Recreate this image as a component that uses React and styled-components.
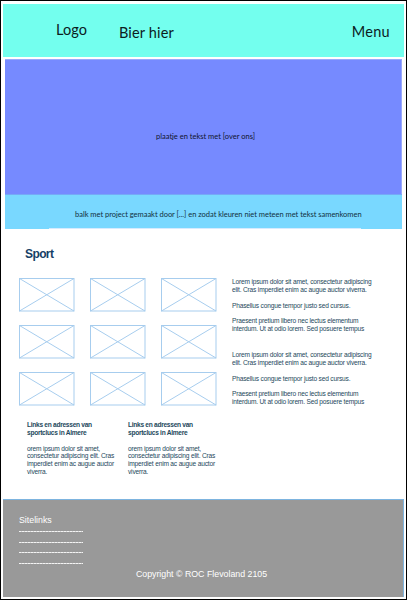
import React from "react";
import styled, { createGlobalStyle } from "styled-components";

const GlobalStyle = createGlobalStyle`
  * { box-sizing: border-box; }
  body { margin: 0; background: #fff; }
  p, h1, h2, ul { margin: 0; padding: 0; }
`;

const Page = styled.div`
  width: 407px;
  height: 600px;
  border: 1px solid #000;
  padding: 3px 2px 2px;
  display: flex;
  flex-direction: column;
  background: #fff;
  color: #24485c;
  font-family: "Liberation Sans", Arial, sans-serif;
`;

const Header = styled.header`
  height: 53px;
  width: 401px;
  background: #73ffee;
  color: #0c201e;
  display: flex;
  align-items: flex-start;
  padding: 17px 14px 0 53px;
  font-family: Lato, sans-serif;
  font-size: 14.5px;
  line-height: 18px;
  white-space: nowrap;
`;

const Logo = styled.span`
  width: 63px;
  letter-spacing: 0.1px;
`;

const Title = styled.span`
  flex: 1;
  padding-top: 3px;
  letter-spacing: 0.15px;
`;

const MenuLink = styled.span`
  padding-top: 2px;
  letter-spacing: 0.3px;
`;

const Hero = styled.section`
  margin: 2px 2px 0;
  width: 397px;
  height: 135px;
  border-top: 1px solid #9aa9fb;
  border-right: 1px solid #9aa9fb;
  background: #768aff;
  display: flex;
  justify-content: center;
  padding: 72px 0 0 5px;
  color: #10142c;
  font: 7.5px/10px Lato, sans-serif;
  white-space: nowrap;
`;

const Band = styled.section`
  margin-left: 2px;
  width: 397px;
  height: 35px;
  border-top: 1px solid #76a9f6;
  background: #79d8ff;
  display: flex;
  flex-direction: column;
  justify-content: space-between;
  padding: 15px 41px 0 44px;
  color: #12303e;
  font: 7.5px/10px Lato, sans-serif;
  letter-spacing: -0.02px;
  white-space: nowrap;

  p { padding-left: 26px; }
`;

const BandRule = styled.div`
  height: 1px;
  background: #d5ebff;
`;

const Heading = styled.h1`
  margin: 16px 0 0 22px;
  height: 18px;
  font-size: 12px;
  line-height: 18px;
  letter-spacing: -0.6px;
  color: #163f66;
`;

const Main = styled.main`
  flex: 1;
  display: flex;
  padding: 15px 0 0 16px;
`;

const Left = styled.div`
  width: 213px;
`;

const Gallery = styled.div`
  display: grid;
  grid-template-columns: repeat(3, 56px);
  grid-auto-rows: 34px;
  gap: 13px 15px;
`;

const Thumb = styled.svg`
  width: 56px;
  height: 34px;
  fill: none;
  stroke: #a7cdee;
`;

const Columns = styled.div`
  display: flex;
  margin: 15px 0 0 8px;
`;

const LinkBlock = styled.section`
  width: 101px;
`;

const BlockTitle = styled.h2`
  font-size: 6.6px;
  line-height: 7.75px;
  letter-spacing: -0.28px;
  white-space: nowrap;
  margin-bottom: 8px;
`;

const Copy = styled.p`
  font-size: 6.6px;
  line-height: 7.75px;
  letter-spacing: -0.18px;
  white-space: nowrap;
  margin-bottom: 8px;
`;

const Articles = styled.div`
  display: flex;
  flex-direction: column;
  gap: 10px;
`;

const Article = styled.article`
  height: 63px;
`;

const Footer = styled.footer`
  width: 401px;
  height: 98px;
  background: #999;
  border-top: 1px solid #7db4df;
  border-right: 1px solid #7db4df;
  color: #fff;
  padding: 14px 0 0 16px;
  font-size: 8.8px;
  line-height: 13px;
`;

const SiteLinks = styled.ul`
  width: 64px;
  list-style: none;
  margin-top: 4px;
`;

const SiteLink = styled.li`
  height: 10.67px;
  background: repeating-linear-gradient(90deg, #f4f4f4 0 2px, #d3d3d3 2px 3px) 0 0 / 100% 1px no-repeat;
`;

const Copyright = styled.p`
  text-align: center;
  padding-right: 19px;
  margin-top: -6px;
`;

function Placeholder() {
  return (
    <Thumb viewBox="0 0 56 34">
      <rect x=".5" y=".5" width="54.5" height="32.5" />
      <path d="M.5 .5 55 33M55 .5 .5 33" />
    </Thumb>
  );
}

function LoremArticle() {
  return (
    <Article>
      <Copy>
        Lorem ipsum dolor sit amet, consectetur adipiscing<br />
        elit. Cras imperdiet enim ac augue auctor viverra.
      </Copy>
      <Copy>Phasellus congue tempor justo sed cursus.</Copy>
      <Copy>
        Praesent pretium libero nec lectus elementum<br />
        interdum. Ut at odio lorem. Sed posuere tempus
      </Copy>
    </Article>
  );
}

function LinksAndAddresses() {
  return (
    <LinkBlock>
      <BlockTitle>
        Links en adressen van<br />
        sportclucs in Almere
      </BlockTitle>
      <Copy>
        orem ipsum dolor sit amet,<br />
        consectetur adipiscing elit. Cras<br />
        imperdiet enim ac augue auctor<br />
        viverra.
      </Copy>
    </LinkBlock>
  );
}

export default function App() {
  return (
    <>
      <GlobalStyle />
      <Page>
        <Header>
          <Logo>Logo</Logo>
          <Title>Bier hier</Title>
          <MenuLink>Menu</MenuLink>
        </Header>
        <Hero>plaatje en tekst met [over ons]</Hero>
        <Band>
          <p>balk met project gemaakt door [...] en zodat kleuren niet meteen met tekst samenkomen</p>
          <BandRule />
        </Band>
        <Heading>Sport</Heading>
        <Main>
          <Left>
            <Gallery>
              {Array.from({ length: 9 }, (_, i) => <Placeholder key={i} />)}
            </Gallery>
            <Columns>
              <LinksAndAddresses />
              <LinksAndAddresses />
            </Columns>
          </Left>
          <Articles>
            <LoremArticle />
            <LoremArticle />
          </Articles>
        </Main>
        <Footer>
          <p>Sitelinks</p>
          <SiteLinks>
            <SiteLink /><SiteLink /><SiteLink /><SiteLink />
          </SiteLinks>
          <Copyright>Copyright © ROC Flevoland 2105</Copyright>
        </Footer>
      </Page>
    </>
  );
}
